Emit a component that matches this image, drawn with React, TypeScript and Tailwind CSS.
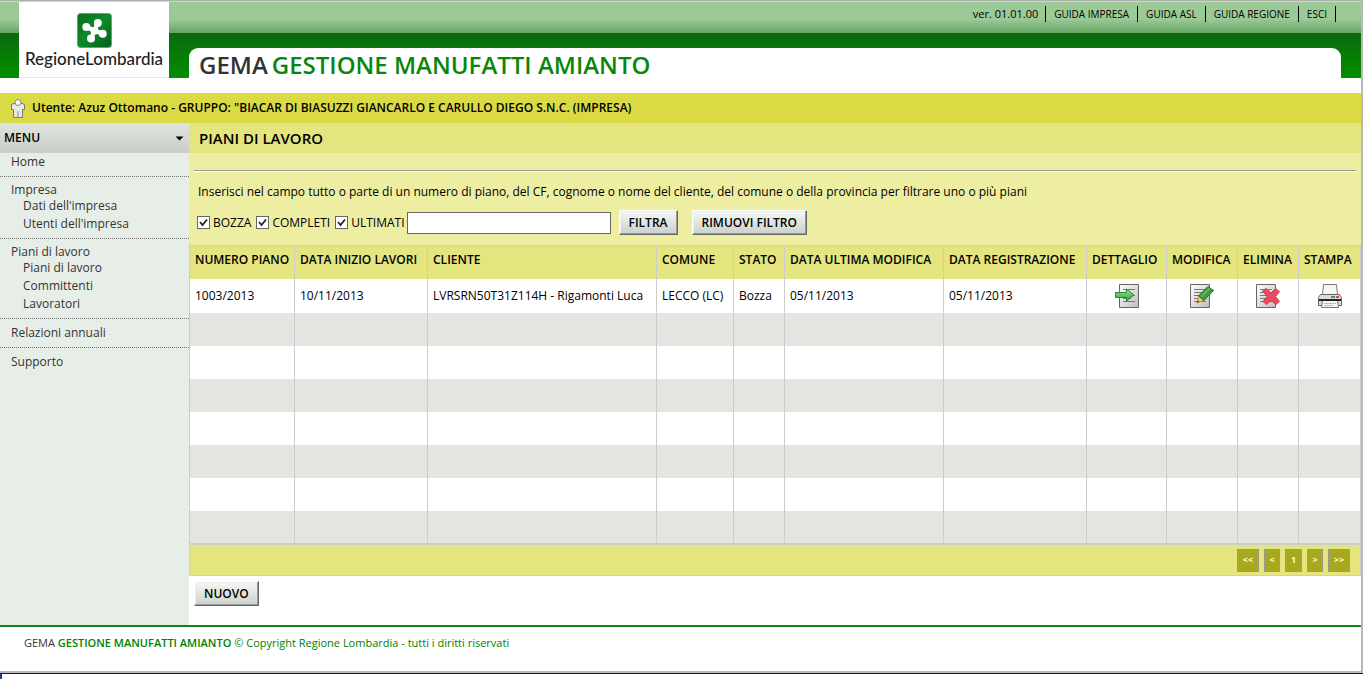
import type { ReactNode } from 'react'

const guides = ['GUIDA IMPRESA', 'GUIDA ASL', 'GUIDA REGIONE', 'ESCI']

const menu = [
  { label: 'Impresa', items: ["Dati dell'impresa", "Utenti dell'impresa"] },
  { label: 'Piani di lavoro', items: ['Piani di lavoro', 'Committenti', 'Lavoratori'] },
]

const columns = [
  { label: 'NUMERO PIANO', width: 'w-[105px]' },
  { label: 'DATA INIZIO LAVORI', width: 'w-[133px]' },
  { label: 'CLIENTE', width: '' },
  { label: 'COMUNE', width: 'w-[77px]' },
  { label: 'STATO', width: 'w-[51px]' },
  { label: 'DATA ULTIMA MODIFICA', width: 'w-[159px]' },
  { label: 'DATA REGISTRAZIONE', width: 'w-[143px]' },
  { label: 'DETTAGLIO', width: 'w-[80px]' },
  { label: 'MODIFICA', width: 'w-[71px]' },
  { label: 'ELIMINA', width: 'w-[61px]' },
  { label: 'STAMPA', width: 'w-[62px]' },
]

const plan = ['1003/2013', '10/11/2013', 'LVRSRN50T31Z114H - Rigamonti Luca', 'LECCO (LC)', 'Bozza', '05/11/2013', '05/11/2013']

const emptyRows = [0, 1, 2, 3, 4, 5, 6]

const pages = [
  { label: '<<', width: 'w-[22px]' },
  { label: '<', width: 'w-4' },
  { label: '1', width: 'w-[17px]' },
  { label: '>', width: 'w-4' },
  { label: '>>', width: 'w-[22px]' },
]

function Logo() {
  return (
    <a href="#" className="flex h-[76px] w-[150px] flex-col items-center border-b border-[#dfe9e2] bg-white pt-[11px] text-[#222]">
      <svg className="shrink-0" width="35" height="35" viewBox="0 0 35 35" aria-hidden="true">
        <defs>
          <linearGradient id="logo" x1="0" y1="0" x2="1" y2="1">
            <stop offset="0" stopColor="#0a6f1c" />
            <stop offset="0.5" stopColor="#0c8a2a" />
            <stop offset="1" stopColor="#085a1c" />
          </linearGradient>
        </defs>
        <rect x="0.5" y="0.5" width="34" height="34" rx="3" fill="url(#logo)" stroke="#5fa878" />
        <path d="M20.800 10L17.500 17.500L14 25.500M9.500 14L17.500 17.500L25.500 20.800" fill="none" stroke="#fff" strokeWidth="4.200" />
        <g fill="#fff">
          <circle cx="20.800" cy="10" r="4" />
          <circle cx="9.300" cy="14" r="4" />
          <circle cx="25.700" cy="20.800" r="4" />
          <circle cx="14" cy="25.500" r="4" />
          <circle cx="17.500" cy="17.700" r="4" />
        </g>
      </svg>
      <span className="font-['Lato',sans-serif] text-[17px] leading-[22px] font-medium">RegioneLombardia</span>
    </a>
  )
}

function UserIcon() {
  return (
    <svg width="14" height="19" viewBox="0 0 14 19" aria-hidden="true">
      <path d="M0.500 5.500L3 4.500H11L13.500 5.500V10.500H11.500V18.500H2.500V10.500H0.500Z" fill="#e9e9e6" stroke="#777" />
      <path d="M7 12V18.500" stroke="#888" />
      <circle cx="7" cy="3.500" r="3" fill="#f7f7f4" stroke="#888" />
    </svg>
  )
}

function Sheet({ x, children }: { x: number; children: ReactNode }) {
  return (
    <svg width="24" height="24" viewBox="0 0 24 24" aria-hidden="true">
      <defs>
        <linearGradient id="sheet" x1="0" y1="0" x2="1" y2="1">
          <stop offset="0" stopColor="#fff" />
          <stop offset="1" stopColor="#bdbdbd" />
        </linearGradient>
        <linearGradient id="green" x1="0" y1="0" x2="0" y2="1">
          <stop offset="0" stopColor="#9be89b" />
          <stop offset="1" stopColor="#2d9b35" />
        </linearGradient>
      </defs>
      <g transform={`translate(${x} 0)`}>
        <path d="M0.500 0.500H19.500V23.500H0.500Z" fill="url(#sheet)" stroke="#666" />
        <path d="M4 5.500H16M4 8.500H12M4 11.500H16M4 14.500H12M4 17.500H16" stroke="#777" />
      </g>
      {children}
    </svg>
  )
}

function DetailIcon() {
  return (
    <Sheet x={4}>
      <path d="M0.500 8.500H11.500V5L19 11L11.500 17V13.500H0.500Z" fill="url(#green)" stroke="#218a35" />
    </Sheet>
  )
}

function EditIcon() {
  return (
    <Sheet x={0}>
      <path d="M7 19L8.500 12L14 16.500Z" fill="#f3cf4a" stroke="#a48324" strokeWidth="0.600" />
      <path d="M7 19L7.600 16.200L9.600 17.800Z" fill="#444" />
      <path d="M8.500 12L18 2.500L23.500 6.500L14 16.500Z" fill="#3f9c3f" stroke="#236e25" />
      <path d="M11 13L20 4" stroke="#6dbb62" strokeWidth="1.500" />
    </Sheet>
  )
}

function DeleteIcon() {
  return (
    <Sheet x={0}>
      <path
        d="M6.500 7L10 4.500L15 9L19.500 4.500L23.500 7.500L19.500 12.500L23.500 17.500L20 20.500L15 16.500L10.500 20.500L7 17.500L11 12.500Z"
        fill="#e84a60"
        stroke="#d83a52"
        strokeLinejoin="round"
      />
    </Sheet>
  )
}

function PrintIcon() {
  return (
    <svg width="24" height="24" viewBox="0 0 24 24" aria-hidden="true">
      <path d="M4.500 10.500L5.500 0.500H18.500L19.500 10.500Z" fill="#f6f6f6" stroke="#777" />
      <path d="M2.500 10.500H21.500L23.500 13.500V21.500H0.500V13.500Z" fill="#dcdcdc" stroke="#666" />
      <path d="M13 13H17" stroke="#489060" strokeWidth="2" />
      <path d="M18 13H21" stroke="#e04848" strokeWidth="2" />
      <path d="M4.500 16.500H19.500L20.500 23.500H3.500Z" fill="#f8f8f8" stroke="#777" />
      <path d="M1 16H23" stroke="#222" strokeWidth="2" />
      <path d="M6 19.500H18M6 21.500H15" stroke="#bbb" />
    </svg>
  )
}

const actions = [
  { label: 'Dettaglio', icon: <DetailIcon /> },
  { label: 'Modifica', icon: <EditIcon /> },
  { label: 'Elimina', icon: <DeleteIcon /> },
  { label: 'Stampa', icon: <PrintIcon /> },
]

function Button({ children }: { children: string }) {
  return (
    <button
      type="button"
      className="h-[25px] border border-t-white border-r-[#666] border-b-[#666] border-l-white bg-linear-to-b from-[#f5f9f4] to-[#cbd1ca] px-[9px] text-[12px] leading-[21px] font-semibold text-black shadow-[inset_-1px_-1px_0_#999,inset_1px_1px_0_#eee]"
    >
      {children}
    </button>
  )
}

function Check({ label }: { label: string }) {
  return (
    <label className="flex items-center gap-[3px] text-[12px]">
      <span className="relative flex">
        <input type="checkbox" defaultChecked className="size-[13px] appearance-none border border-[#666] bg-white" />
        <svg className="pointer-events-none absolute top-0 left-0" width="13" height="13" viewBox="0 0 13 13" aria-hidden="true">
          <path d="M3 6L5.500 9L10 3.500" fill="none" stroke="#222" strokeWidth="1.800" />
        </svg>
      </span>
      {label}
    </label>
  )
}

function Header() {
  return (
    <header className="flex h-[91px] items-start bg-[linear-gradient(to_bottom,#9bca97_0,#9bca97_17px,#66a466_31px,#0a6a0c_31px,#009000_76px,#fff_76px)] pl-[19px]">
      <Logo />
      <div className="flex grow flex-col pl-5">
        <nav className="flex h-[46px] items-start justify-end pt-1 pr-[25px] text-[10px] leading-4">
          <span className="border-r border-black pr-[7px] text-[11px]">ver. 01.01.00</span>
          {guides.map((guide) => (
            <a key={guide} href="#" className="border-r border-black px-2">
              {guide}
            </a>
          ))}
        </nav>
        <h1 className="mr-5 flex h-[45px] gap-1 rounded-t-[9px] bg-white pl-[10px] text-[24px] leading-[34px] font-semibold whitespace-nowrap text-[#0a860a]">
          <span className="text-[#333]">GEMA</span>
          <span>GESTIONE MANUFATTI AMIANTO</span>
        </h1>
      </div>
    </header>
  )
}

function Sidebar() {
  return (
    <aside className="w-[189px] shrink-0 bg-[#e7eee8] text-[12px] text-[#333]">
      <button
        type="button"
        className="flex h-[30px] w-full items-center justify-between bg-linear-to-b from-[#dfe4de] to-[#c9cfc8] pr-[5px] pl-1 font-semibold text-black"
      >
        MENU
        <svg width="9" height="5" viewBox="0 0 9 5" aria-hidden="true">
          <path d="M0.500 0.500H8.500L4.500 4.500Z" />
        </svg>
      </button>
      <nav className="leading-4">
        <div className="border-b border-dotted border-[#777] pt-px pb-[6px] pl-[11px]">
          <a href="#">Home</a>
        </div>
        {menu.map((group) => (
          <div key={group.label} className="border-b border-dotted border-[#777] py-[5px] pl-[11px]">
            <a href="#" className="block leading-[15px]">{group.label}</a>
            <ul className="pl-3 leading-[18px]">
              {group.items.map((item) => (
                <li key={item}>
                  <a href="#">{item}</a>
                </li>
              ))}
            </ul>
          </div>
        ))}
        <div className="border-b border-dotted border-[#777] py-[6px] pl-[11px]">
          <a href="#">Relazioni annuali</a>
        </div>
        <div className="py-[6px] pl-[11px]">
          <a href="#">Supporto</a>
        </div>
      </nav>
    </aside>
  )
}

function PlansTable() {
  return (
    <table className="w-full table-fixed border-collapse border border-[#ccc] text-left text-[12px]">
      <thead>
        <tr className="h-[33px] bg-[#e4e57e]">
          {columns.map((column) => (
            <th key={column.label} className={`${column.width} border-l border-[#ccc] pb-1 pl-[5px] font-semibold whitespace-nowrap`}>
              {column.label}
            </th>
          ))}
        </tr>
      </thead>
      <tbody>
        <tr className="h-[34px] bg-white">
          {plan.map((value, i) => (
            <td key={i} className="border-l border-[#ccc] pl-[5px] whitespace-nowrap">
              {value}
            </td>
          ))}
          {actions.map((action) => (
            <td key={action.label} className="border-l border-[#ccc]">
              <button type="button" aria-label={action.label} className="mx-auto block">
                {action.icon}
              </button>
            </td>
          ))}
        </tr>
        {emptyRows.map((row) => (
          <tr key={row} className="h-[33px] odd:bg-white even:bg-[#e5e4e0]">
            {columns.map((column) => (
              <td key={column.label} className="border-l border-[#ccc]" />
            ))}
          </tr>
        ))}
      </tbody>
    </table>
  )
}

function Main() {
  return (
    <main className="min-w-0 grow bg-white">
      <h2 className="bg-[#e4e57e] pl-[10px] text-[15px] leading-[30px] font-semibold">PIANI DI LAVORO</h2>
      <form className="h-[92px] bg-[#eeeea3] px-[5px] pt-[17px]">
        <hr className="h-[2px] border-t border-b border-t-[#999] border-b-white" />
        <p className="pt-[10px] pl-1 text-[12px] leading-5">
          Inserisci nel campo tutto o parte di un numero di piano, del CF, cognome o nome del cliente, del comune o della
          provincia per filtrare uno o più piani
        </p>
        <div className="flex items-center gap-[2px] pt-2 pl-[3px]">
          <div className="flex gap-[5px]">
            <Check label="BOZZA" />
            <Check label="COMPLETI" />
            <Check label="ULTIMATI" />
          </div>
          <input type="text" aria-label="Filtro piani" className="h-[22px] w-[204px] border border-[#666] bg-white px-1 text-[12px]" />
          <div className="flex gap-[14px] pl-[6px]">
            <Button>FILTRA</Button>
            <Button>RIMUOVI FILTRO</Button>
          </div>
        </div>
      </form>
      <PlansTable />
      <div className="flex h-[32px] items-center justify-end gap-[5px] border border-[#ccc] bg-[#e4e57e] pr-[10px]">
        {pages.map((page) => (
          <button
            key={page.label}
            type="button"
            className={`${page.width} h-[23px] border border-[#999] bg-[#a8a820] text-[9px] font-bold text-[#ffffc0]`}
          >
            {page.label}
          </button>
        ))}
      </div>
      <div className="flex px-[5px] pt-[5px] pb-[19px]">
        <Button>NUOVO</Button>
      </div>
    </main>
  )
}

export default function App() {
  return (
    <div className="font-['Trebuchet_MS','Open_Sans',sans-serif] text-black">
      <div className="border-t border-r-2 border-b-2 border-t-[#b0b0b0] border-r-[#b8b8b8] border-b-[#b8b8b8]">
        <div className="border-t border-[#d0d0d0]">
          <Header />
          <div className="flex h-[30px] items-center gap-[7px] bg-[#dada44] pl-[11px] text-[12px] font-semibold">
            <UserIcon />
            Utente: Azuz Ottomano - GRUPPO: "BIACAR DI BIASUZZI GIANCARLO E CARULLO DIEGO S.N.C. (IMPRESA)
          </div>
          <div className="flex">
            <Sidebar />
            <Main />
          </div>
          <footer className="border-t-2 border-[#108810] pt-2 pb-5 pl-6 text-[11px] leading-4 text-[#008000]">
            <span className="text-[#333]">GEMA</span> <span className="font-semibold">GESTIONE MANUFATTI AMIANTO</span> © Copyright
            Regione Lombardia - tutti i diritti riservati
          </footer>
        </div>
      </div>
      <div className="h-px bg-[#141c30]" />
      <div className="h-[5px] border-l-2 border-[#1c4080] bg-white" />
    </div>
  )
}
